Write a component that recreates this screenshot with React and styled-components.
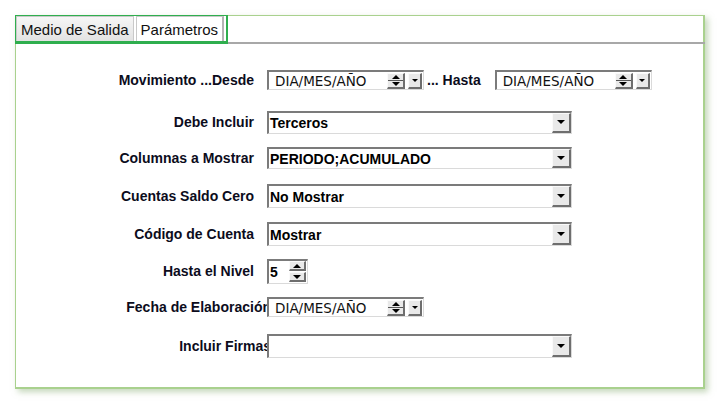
import React from 'react'
import styled, {createGlobalStyle} from 'styled-components'

const GlobalStyle = createGlobalStyle`
    body {
        margin: 0;
        background: #fff;
        font-family: 'Liberation Sans', Arial, sans-serif;
    }
`
const Page = styled.div`
    width: 720px;
    height: 405px;
    padding: 15px 0 0 15px;
    box-sizing: border-box;
`
const Frame = styled.div`
    width: 690px;
    height: 374px;
    box-sizing: border-box;
    border: 1px solid #a9d18e;
    border-right-width: 2px;
    border-bottom-width: 2px;
    box-shadow: 3px 3px 6px rgba(140, 175, 120, .5);
    background: #fff;
`
const TabBar = styled.div`
    display: flex;
    align-items: flex-end;
    margin: -1px -2px 0 -1px;
`
const TabStrip = styled.div`
    display: flex;
    gap: 2px;
    padding-right: 2px;
    border: solid #2fae4e;
    border-width: 1px 2px 3px 1px;
`
const Tab = styled.div`
    height: 25px;
    box-sizing: border-box;
    padding: 0 ${p => p.$pad}px;
    display: flex;
    align-items: center;
    font-size: 15px;
    color: #111;
    background: ${p => p.$active ? '#fff' : 'linear-gradient(#f6f6f6, #e2e2e2)'};
    border: 1px solid #c9c9c9;
    border-bottom: none;
    border-right: ${p => p.$active ? '2px solid #b4b4b4' : '1px solid #c9c9c9'};
`
const TabLine = styled.div`
    flex: 1;
    border-bottom: 2px solid #a8a8a8;
`
const Form = styled.div`
    padding-top: 24px;
`
const Row = styled.div`
    display: flex;
    align-items: center;
    height: 24px;
    margin-top: ${p => p.$space || 0}px;
`
const Label = styled.div`
    width: ${p => p.$tight ? 255 : 251}px;
    margin-right: ${p => p.$tight ? -4 : 0}px;
    flex-shrink: 0;
    box-sizing: border-box;
    padding-right: ${p => p.$tight ? 0 : 13}px;
    text-align: right;
    white-space: nowrap;
    font-size: 14px;
    font-weight: bold;
    color: #0c0c1c;
`
const Inline = styled.span`
    font-size: 14px;
    font-weight: bold;
    color: #0c0c1c;
    margin: 0 14px 0 3px;
    white-space: nowrap;
`
const Sunken = styled.div`
    position: relative;
    z-index: 1;
    display: flex;
    align-items: center;
    box-sizing: border-box;
    width: ${p => p.$w}px;
    height: ${p => p.$h}px;
    background: #fff;
    border-style: solid;
    border-width: 2px 1px 1px 2px;
    border-color: #7b7b7b #dadada #dadada #7b7b7b;
`
const Value = styled.span`
    flex: 1;
    padding-left: 1px;
    font-size: 14px;
    font-weight: bold;
    color: #000;
    white-space: nowrap;
`
const DateText = styled.span`
    flex: 1;
    padding-left: 6px;
    font-family: 'DejaVu Sans', Verdana, sans-serif;
    font-size: 13.5px;
    color: #111;
    white-space: nowrap;
`
const Raised = styled.div`
    display: flex;
    flex-direction: column;
    align-items: center;
    justify-content: center;
    box-sizing: border-box;
    width: ${p => p.$w}px;
    height: ${p => p.$h}px;
    margin-right: ${p => p.$mr || 0}px;
    background: #e9e9e9;
    border-style: solid;
    border-width: 1px 2px 2px 1px;
    border-color: #fafafa #6e6e6e #6e6e6e #fafafa;
`
const Half = styled.div`
    flex: 1;
    width: 100%;
    display: flex;
    align-items: center;
    justify-content: center;
    border-top: ${p => p.$split ? '1px solid #555' : 'none'};
`
const Arrow = styled.span`
    width: 0;
    height: 0;
    border-left: ${p => p.$s}px solid transparent;
    border-right: ${p => p.$s}px solid transparent;
    ${p => p.$up ? 'border-bottom' : 'border-top'}: ${p => p.$s}px solid #000;
`
const LevelButtons = styled.div`
    display: flex;
    flex-direction: column;
    gap: 1px;
    margin: 0 1px 0 auto;
`

const DropButton = ({h = 19}) => (
    <Raised $w={19} $h={h}>
        <Arrow $s={4} />
    </Raised>
)

const Select = ({value, h}) => (
    <Sunken $w={305} $h={h}>
        <Value>{value}</Value>
        <DropButton h={h - 3} />
    </Sunken>
)

const DateBox = () => (
    <Sunken $w={157} $h={20}>
        <DateText>DIA/MES/AÑO</DateText>
        <Raised $w={18} $h={16} $mr={3}>
            <Half><Arrow $up $s={4} /></Half>
            <Half $split><Arrow $s={4} /></Half>
        </Raised>
        <Raised $w={14} $h={16} $mr={1}>
            <Arrow $s={3} />
        </Raised>
    </Sunken>
)

const LevelBox = ({value}) => (
    <Sunken $w={41} $h={25}>
        <Value>{value}</Value>
        <LevelButtons>
            <Raised $w={17} $h={10}><Arrow $up $s={4} /></Raised>
            <Raised $w={17} $h={10}><Arrow $s={4} /></Raised>
        </LevelButtons>
    </Sunken>
)

export default function App() {
    return (
        <Page>
            <GlobalStyle />
            <Frame>
                <TabBar>
                    <TabStrip>
                        <Tab $pad={4}>Medio de Salida</Tab>
                        <Tab $pad={4} $active>Parámetros</Tab>
                    </TabStrip>
                    <TabLine />
                </TabBar>

                <Form>
                    <Row>
                        <Label>Movimiento ...Desde</Label>
                        <DateBox />
                        <Inline>... Hasta</Inline>
                        <DateBox />
                    </Row>
                    <Row $space={18}>
                        <Label>Debe Incluir</Label>
                        <Select value="Terceros" h={23} />
                    </Row>
                    <Row $space={12}>
                        <Label>Columnas a Mostrar</Label>
                        <Select value="PERIODO;ACUMULADO" h={22} />
                    </Row>
                    <Row $space={14}>
                        <Label>Cuentas Saldo Cero</Label>
                        <Select value="No Mostrar" h={24} />
                    </Row>
                    <Row $space={14}>
                        <Label>Código de Cuenta</Label>
                        <Select value="Mostrar" h={24} />
                    </Row>
                    <Row $space={13}>
                        <Label>Hasta el Nivel</Label>
                        <LevelBox value="5" />
                    </Row>
                    <Row $space={12}>
                        <Label $tight>Fecha de Elaboración</Label>
                        <DateBox />
                    </Row>
                    <Row $space={15}>
                        <Label $tight>Incluir Firmas</Label>
                        <Select value="" h={24} />
                    </Row>
                </Form>
            </Frame>
        </Page>
    )
}
